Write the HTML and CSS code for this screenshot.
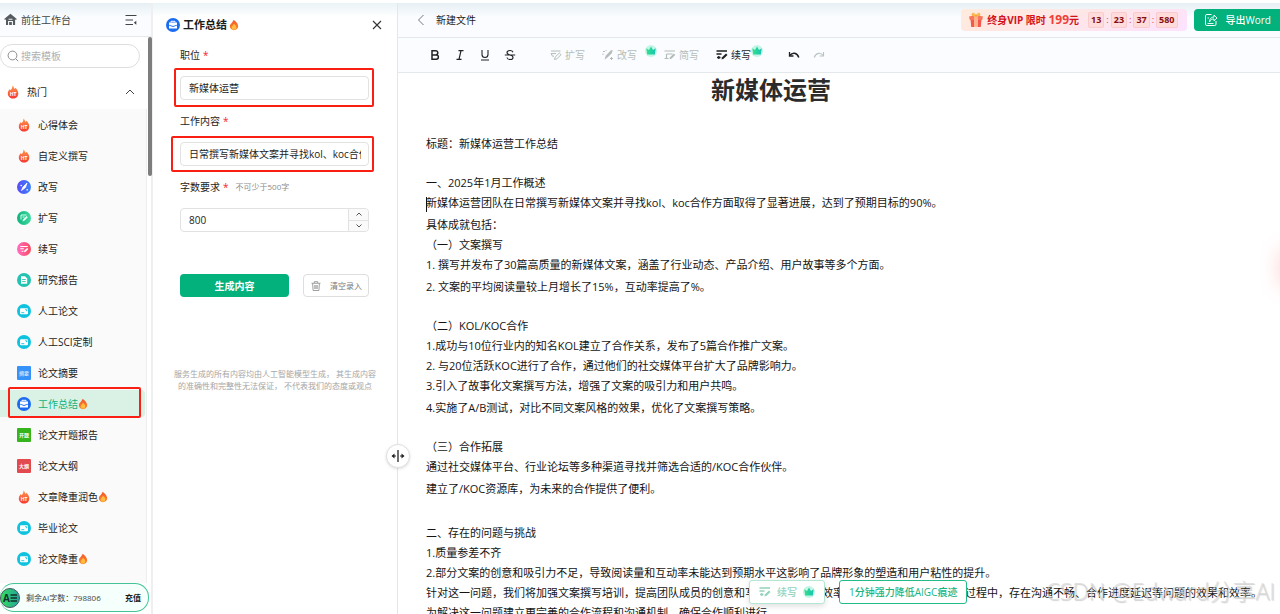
FILE: index.html
```html
<!DOCTYPE html>
<html lang="zh-CN">
<head>
<meta charset="utf-8">
<meta name="viewport" content="width=device-width, initial-scale=1">
<title>新建文件</title>
<link rel="stylesheet" href="styles.css">
</head>
<body>
<svg class="sprite" aria-hidden="true">
  <defs>
    <linearGradient id="g-ht" x1="0" y1="0" x2="0" y2="1"><stop offset="0" stop-color="#ff9a4d"/><stop offset="1" stop-color="#f5372f"/></linearGradient>
    <linearGradient id="g-blue" x1="0" y1="0" x2="1" y2="0"><stop offset="0" stop-color="#5a4cf5"/><stop offset="1" stop-color="#3b82fb"/></linearGradient>
    <linearGradient id="g-green"><stop offset="0" stop-color="#0fb37c"/><stop offset="1" stop-color="#3ddba0"/></linearGradient>
    <linearGradient id="g-pink"><stop offset="0" stop-color="#ff6ec4"/><stop offset="1" stop-color="#fb4a5e"/></linearGradient>
    <linearGradient id="g-crown"><stop offset="0" stop-color="#35e08a"/><stop offset="1" stop-color="#16c3b4"/></linearGradient>
    <linearGradient id="g-avatar"><stop offset="0" stop-color="#35dd5c"/><stop offset="1" stop-color="#22a3a0"/></linearGradient>
    <linearGradient id="g-flame" x1="0" y1="0" x2="0" y2="1"><stop offset="0" stop-color="#f4572a"/><stop offset="1" stop-color="#fb8a2a"/></linearGradient>
  </defs>
  <symbol id="ht" viewBox="0 0 14 14"><path d="M6.400 0.500C7.600 1.600 8 2.600 8.600 4c.4-.3.6-.7.6-1.200 1.800 1.300 3.100 3.400 3.100 5.600 0 3-2.300 5.200-5.200 5.200S1.800 11.300 1.800 8.500c0-1.800.9-3.200 2.200-4.400 0 .6.2 1 .6 1.200C5.700 4 6.600 2.500 6.400.5z" fill="url(#g-ht)"/><text x="7" y="11" font-size="5" font-weight="700" fill="#fff" text-anchor="middle">HT</text></symbol>
  <symbol id="flame" viewBox="0 0 12 14"><path d="M5.600.8C8.500 3 11 5.600 11 8.600c0 2.700-2.200 4.700-5 4.700S1 11.300 1 8.600C1 5.700 4.600 4.200 5.600.8z" fill="url(#g-flame)"/><path d="M6 5.500c1.700 1.500 2.800 2.700 2.800 4.200 0 1.600-1.200 2.800-2.800 2.800s-2.800-1.200-2.800-2.800C3.200 8.200 5.200 7.500 6 5.500z" fill="#ffbd3f"/></symbol>
  <symbol id="rewrite-c" viewBox="0 0 14 14"><circle cx="7" cy="7" r="7" fill="url(#g-blue)"/><path d="M4.500 10.500 6 7l4-4-1.500 4.500zM3.500 5.500h1.500M4.200 4.800v1.500M9.500 9.800H11M10.200 9v1.600" fill="#fff" stroke="#fff" stroke-width=".8"/></symbol>
  <symbol id="expand-c" viewBox="0 0 14 14"><circle cx="7" cy="7" r="7" fill="url(#g-green)"/><path d="M4 8.500V4h5.500M5.500 6h2" fill="none" stroke="#d7fff0" stroke-width="1"/><path d="M5.500 10.500 6 8.500l3.500-3.500 1.300 1.300-3.500 3.500z" fill="#eafff6"/></symbol>
  <symbol id="cont-c" viewBox="0 0 14 14"><circle cx="7" cy="7" r="7" fill="url(#g-pink)"/><path d="M3.300 4.500h7.500M3.300 6.800h3.500M4.500 9.200h2" stroke="#fff" stroke-width="1.100"/><path d="m7 10.300.5-1.800 2.600-2.600 1.200 1.200-2.600 2.600z" fill="#fff"/></symbol>
  <symbol id="report-c" viewBox="0 0 14 14"><circle cx="7" cy="7" r="7" fill="#22c3b0"/><path d="M4 3.200h4l2.200 2.200v5.400H4z" fill="#fff"/><path d="M5.200 6.500h3.500M5.200 8.600h3.500" stroke="#22c3b0" stroke-width=".9"/></symbol>
  <symbol id="paper-c" viewBox="0 0 14 14"><circle cx="7" cy="7" r="7" fill="#0fc3de"/><rect x="3" y="4.200" width="8" height="6" rx="1" fill="#fff"/><path d="M4.300 8.700h3M8.200 5.700h1.400v1.500" stroke="#0fc3de" stroke-width=".9" fill="none"/></symbol>
  <symbol id="case-c" viewBox="0 0 14 14"><circle cx="7" cy="7" r="7" fill="#1b6cf0"/><path d="M5 4.500V3.300h4v1.200" fill="none" stroke="#fff"/><path d="M3 4.500h8v2.200L7 8 3 6.700zM3 7.600l4 1.300 4-1.300v3H3z" fill="#fff"/></symbol>
  <symbol id="sq-sum" viewBox="0 0 14 14"><rect width="14" height="14" rx="1" fill="#3592f8"/><text x="7" y="9" font-size="5" fill="#fff" text-anchor="middle">摘要</text></symbol>
  <symbol id="sq-open" viewBox="0 0 14 14"><rect width="14" height="14" rx="1" fill="#35b41c"/><text x="7" y="9" font-size="5" font-weight="700" fill="#fff" text-anchor="middle">开题</text></symbol>
  <symbol id="sq-out" viewBox="0 0 14 14"><rect width="14" height="14" rx="1" fill="#e24a50"/><text x="7" y="9" font-size="5" font-weight="700" fill="#fff" text-anchor="middle">大纲</text></symbol>
  <symbol id="crown" viewBox="0 0 12 12"><circle cx="6" cy="6" r="6" fill="#c4f5e6"/><path d="M1.300 3.200 4 5l2-3.500L8 5l2.700-1.800L9.800 9.500H2.200z" fill="url(#g-crown)"/></symbol>
  <symbol id="t-expand" viewBox="0 0 12 12"><path d="M1 2h9.500M1 4.600h5M2.500 7.200h1.500M2.500 7.200 1 4.600" fill="none" stroke="currentColor"/><path d="m4.500 10.500.6-2.300 4.200-4.200 1.700 1.700-4.200 4.200z" fill="none" stroke="currentColor"/></symbol>
  <symbol id="t-rewrite" viewBox="0 0 12 12"><path d="m2.500 10.800 1.200-4L9 1.200h1.800L9.500 4.500 6 8z" fill="currentColor"/><path d="M1 2.500h2M.2 5.200h1.500M4 1v1M8 9.500h3M9.500 8v3" stroke="currentColor"/></symbol>
  <symbol id="t-short" viewBox="0 0 12 12"><path d="M.5 2h10.500M2.500 5h6M.5 9.500h4M2.500 5v4.500" fill="none" stroke="currentColor" stroke-width="1.200"/><path d="m5.500 10.300.6-2 3.700-3.700 1.400 1.400-3.700 3.700z" fill="currentColor"/></symbol>
  <symbol id="t-cont" viewBox="0 0 12 12"><path d="M.5 2h10.500M.5 5h5M1 8.500h3.500M2.800 7v3" stroke="currentColor" stroke-width="1.300"/><path d="m5.500 10.500.6-2.200 3.900-3.900 1.500 1.500-3.900 3.900z" fill="currentColor"/></symbol>
</svg>

<div class="app">
  <aside class="sidebar">
    <div class="side-head">
      <a class="home" href="#"><svg class="i13" viewBox="0 0 13 13"><path d="M6.500.8 12.800 6l-.8 1-.9-.7V12H2V6.300L1 7 .2 6z" fill="#565b60"/><path d="M4.600 12V8.500h3.800V12M4.600 6.300h3.800" stroke="#f7f9fb" stroke-width="1.100" fill="none"/></svg>前往工作台</a>
      <button class="plain" type="button" aria-label="收起"><svg class="i12" viewBox="0 0 12 12"><path d="M.5 1.500h11M.5 6H8M.5 10.500h7.500" stroke="#444" stroke-width="1.100"/><path d="M11.300 6.800v4L8.800 8.800z" fill="#444"/></svg></button>
    </div>
    <label class="search"><svg class="i12" viewBox="0 0 12 12"><circle cx="5.500" cy="5.500" r="4.400" fill="none" stroke="#8c8c8c"/><path d="m8.800 8.800 2.400 2.400" stroke="#8c8c8c"/></svg><input type="text" placeholder="搜索模板" aria-label="搜索模板"></label>
    <button class="group" type="button"><svg class="i14"><use href="#ht"/></svg><span>热门</span><svg class="i10" viewBox="0 0 10 10"><path d="m1 7 4-4 4 4" fill="none" stroke="#444"/></svg></button>
    <nav class="menu">
      <a href="#"><svg class="i14"><use href="#ht"/></svg>心得体会</a>
      <a href="#"><svg class="i14"><use href="#ht"/></svg>自定义撰写</a>
      <a href="#"><svg class="i14"><use href="#rewrite-c"/></svg>改写</a>
      <a href="#"><svg class="i14"><use href="#expand-c"/></svg>扩写</a>
      <a href="#"><svg class="i14"><use href="#cont-c"/></svg>续写</a>
      <a href="#"><svg class="i14"><use href="#report-c"/></svg>研究报告</a>
      <a href="#"><svg class="i14"><use href="#paper-c"/></svg>人工论文</a>
      <a href="#"><svg class="i14"><use href="#paper-c"/></svg>人工SCI定制</a>
      <a href="#"><svg class="i14"><use href="#sq-sum"/></svg>论文摘要</a>
      <a href="#" class="active"><svg class="i14"><use href="#case-c"/></svg>工作总结<svg class="hot"><use href="#flame"/></svg><i class="mark mark-menu"></i></a>
      <a href="#"><svg class="i14"><use href="#sq-open"/></svg>论文开题报告</a>
      <a href="#"><svg class="i14"><use href="#sq-out"/></svg>论文大纲</a>
      <a href="#"><svg class="i14"><use href="#ht"/></svg>文章降重润色<svg class="hot"><use href="#flame"/></svg></a>
      <a href="#"><svg class="i14"><use href="#paper-c"/></svg>毕业论文</a>
      <a href="#"><svg class="i14"><use href="#paper-c"/></svg>论文降重<svg class="hot"><use href="#flame"/></svg></a>
      <a href="#" aria-label="更多"><svg class="i14"><use href="#report-c"/></svg></a>
    </nav>
    <i class="thumb"></i>
    <div class="quota">
      <div class="pill">
        <svg class="avatar" viewBox="0 0 20 20"><circle cx="10" cy="10" r="9.500" fill="url(#g-avatar)" stroke="#4b5560"/><text x="6.500" y="13.500" font-size="10" font-weight="700" text-anchor="middle" fill="#13302a">A</text><path d="M10.500 7h6.500M10.500 10h6.500M10.500 13h6.500" stroke="#13302a" stroke-width="1.300"/></svg>
        <span>剩余AI字数：798806</span>
        <a href="#">充值</a>
      </div>
    </div>
  </aside>

  <section class="panel">
    <header class="panel-head">
      <svg class="i14"><use href="#case-c"/></svg>
      <h2>工作总结</h2>
      <svg class="hot"><use href="#flame"/></svg>
      <button class="plain close" type="button" aria-label="关闭"><svg class="i10" viewBox="0 0 10 10"><path d="m1 1 8 8M9 1 1 9" stroke="#333" stroke-width="1.100"/></svg></button>
    </header>
    <form class="form">
      <div class="field">
        <label for="job">职位<b>*</b></label>
        <div class="box"><input id="job" type="text" value="新媒体运营"><i class="mark mark-job"></i></div>
      </div>
      <div class="field">
        <label for="work">工作内容<b>*</b></label>
        <div class="box"><input id="work" type="text" value="日常撰写新媒体文案并寻找kol、koc合作"><i class="mark mark-work"></i></div>
      </div>
      <div class="field">
        <label for="count">字数要求<b>*</b><small>不可少于500字</small></label>
        <div class="box number">
          <input id="count" type="text" inputmode="numeric" value="800">
          <span class="steps">
            <button type="button" aria-label="增加"><svg class="i8" viewBox="0 0 8 8"><path d="m1.500 5.500 2.500-2.500 2.500 2.500" fill="none" stroke="#555"/></svg></button>
            <button type="button" aria-label="减少"><svg class="i8" viewBox="0 0 8 8"><path d="m1.500 2.500 2.500 2.500 2.500-2.500" fill="none" stroke="#555"/></svg></button>
          </span>
        </div>
      </div>
      <div class="actions">
        <button class="primary" type="button">生成内容</button>
        <button class="clear" type="button"><svg class="i10" viewBox="0 0 10 10"><path d="M.5 2.300h9M3.300 2V.7h3.400V2M1.600 2.500l.5 7h5.800l.5-7M3.800 4v4M5 4v4M6.200 4v4" fill="none" stroke="#888" stroke-width=".8"/></svg>清空录入</button>
      </div>
    </form>
    <p class="note">服务生成的所有内容均由人工智能模型生成， 其生成内容<br>的准确性和完整性无法保证， 不代表我们的态度或观点</p>
    <button class="grip" type="button" aria-label="调整宽度"><svg class="i14" viewBox="0 0 14 14"><path d="M7 1v12" stroke="#333" stroke-width="1.400"/><path d="M1.500 7H5M9 7h3.500" stroke="#222" stroke-width="1.200"/><path d="M3.500 4.500.5 7l3 2.500zM10.500 4.500l3 2.500-3 2.500z" fill="#222"/></svg></button>
  </section>

  <main class="editor">
    <header class="top">
      <button class="plain" type="button" aria-label="返回"><svg class="i12" viewBox="0 0 12 12"><path d="M8.500 1 3.500 6l5 5" fill="none" stroke="#777"/></svg></button>
      <span class="file">新建文件</span>
      <div class="promo">
        <svg class="gift" viewBox="0 0 16 16"><path d="M2.500 7h11l-.7 8H3.200z" fill="#f4584c"/><path d="M1 4.500 8 3l7 1.500-.8 3.500H1.800z" fill="#f9765a"/><path d="M6 3.800h4V15H6z" fill="#ffb28c"/><path d="M8 4C5 4.500 3.500 3.500 4 2c.6-1.600 3-1 4 2zm0 0c3 .5 4.500-.5 4-2-.6-1.600-3-1-4 2z" fill="#ffc04a" stroke="#f49a35" stroke-width=".6"/></svg>
        <strong>终身VIP 限时 <em>199</em>元</strong>
        <span class="timer"><b>13</b>:<b>23</b>:<b>37</b>:<b>580</b></span>
      </div>
      <button class="export" type="button"><svg class="i14" viewBox="0 0 14 14"><path d="M7.500 1.500H2.800Q1.500 1.500 1.500 2.800v8.400q0 1.300 1.300 1.300h8q1.200 0 1.200-1.300V8" fill="none" stroke="#fff"/><path d="M5.500 9C5.500 5.500 7.500 4 10 4V2l3 3-3 3V6C8 6 6.500 6.500 5.500 9zM3.500 5h1.500M3.500 10.500h6" fill="none" stroke="#fff" stroke-width=".9"/></svg>导出Word</button>
    </header>
    <div class="tools">
      <div class="marks">
        <button class="plain" type="button" aria-label="加粗"><svg class="i12" viewBox="0 0 12 12"><path d="M3 1.700h3.700a2.100 2.100 0 0 1 0 4.200H3zM3 5.900h4.200a2.200 2.200 0 0 1 0 4.400H3z" fill="none" stroke="#222" stroke-width="1.500"/></svg></button>
        <button class="plain" type="button" aria-label="斜体"><svg class="i12" viewBox="0 0 12 12"><path d="M4.500 1.700H9.500M2.500 10.300h5M7 1.700 5 10.300" stroke="#222" stroke-width="1.200"/></svg></button>
        <button class="plain" type="button" aria-label="下划线"><svg class="i12" viewBox="0 0 12 12"><path d="M3 1v4.500a3 3 0 0 0 6 0V1M2 11h8" fill="none" stroke="#222" stroke-width="1.100"/></svg></button>
        <button class="plain" type="button" aria-label="删除线"><svg class="i12" viewBox="0 0 12 12"><path d="M9 3.300C8.500 2 7.500 1.500 6 1.500c-1.800 0-3 .8-3 2.100 0 1.400 1.300 1.900 3 2.400 1.800.5 3 1 3 2.400 0 1.300-1.200 2.100-3 2.100S3.200 9.800 2.900 8.500M.8 6h10.400" fill="none" stroke="#222" stroke-width="1.100"/></svg></button>
      </div>
      <div class="ai">
        <button class="tool" type="button"><svg class="i12"><use href="#t-expand"/></svg>扩写</button>
        <button class="tool far" type="button"><svg class="i12"><use href="#t-rewrite"/></svg>改写<svg class="badge"><use href="#crown"/></svg></button>
        <button class="tool" type="button"><svg class="i12"><use href="#t-short"/></svg>简写</button>
        <button class="tool on" type="button"><svg class="i12"><use href="#t-cont"/></svg>续写<svg class="badge"><use href="#crown"/></svg></button>
      </div>
      <div class="history">
        <button class="plain" type="button" aria-label="撤销"><svg class="i12" viewBox="0 0 12 12"><path d="M1.500 3v4h4" fill="none" stroke="#222" stroke-width="1.300"/><path d="M1.800 6.500C4.500 3 9 3.500 10.800 8.500" fill="none" stroke="#222" stroke-width="1.500"/></svg></button>
        <button class="plain" type="button" aria-label="重做"><svg class="i12" viewBox="0 0 12 12"><path d="M10.500 3v4h-4" fill="none" stroke="#b9c4c0" stroke-width="1.100"/><path d="M10.200 6.500C7.500 3 3 3.500 1.200 8.500" fill="none" stroke="#b9c4c0" stroke-width="1.200"/></svg></button>
      </div>
    </div>
    <article class="doc">
      <h1>新媒体运营</h1>
      <section><p>标题：新媒体运营工作总结</p></section>
      <section>
        <p>一、2025年1月工作概述</p>
        <p><i class="caret"></i>新媒体运营团队在日常撰写新媒体文案并寻找kol、koc合作方面取得了显著进展，达到了预期目标的90%。</p>
        <p class="lead">具体成就包括：</p>
        <p>（一）文案撰写</p>
        <p>1. 撰写并发布了30篇高质量的新媒体文案，涵盖了行业动态、产品介绍、用户故事等多个方面。</p>
        <p class="lead">2. 文案的平均阅读量较上月增长了15%，互动率提高了%。</p>
      </section>
      <section>
        <p>（二）KOL/KOC合作</p>
        <p>1.成功与10位行业内的知名KOL建立了合作关系，发布了5篇合作推广文案。</p>
        <p>2. 与20位活跃KOC进行了合作，通过他们的社交媒体平台扩大了品牌影响力。</p>
        <p>3.引入了故事化文案撰写方法，增强了文案的吸引力和用户共鸣。</p>
        <p class="lead">4.实施了A/B测试，对比不同文案风格的效果，优化了文案撰写策略。</p>
      </section>
      <section>
        <p>（三）合作拓展</p>
        <p>通过社交媒体平台、行业论坛等多种渠道寻找并筛选合适的/KOC合作伙伴。</p>
        <p class="lead">建立了/KOC资源库，为未来的合作提供了便利。</p>
      </section>
      <section class="chapter">
        <p>二、存在的问题与挑战</p>
        <p>1.质量参差不齐</p>
        <p>2.部分文案的创意和吸引力不足，导致阅读量和互动率未能达到预期水平这影响了品牌形象的塑造和用户粘性的提升。</p>
        <p>针对这一问题，我们将加强文案撰写培训，提高团队成员的创意和写作能力与工作效率，在与合作方沟通对接的过程中，存在沟通不畅、合作进度延迟等问题的效果和效率。</p>
        <p>为解决这一问题建立更完善的合作流程和沟通机制，确保合作顺利进行</p>
      </section>
    </article>
    <div class="float">
      <button class="f-cont" type="button"><svg class="i12"><use href="#t-cont"/></svg>续写<svg class="i12"><use href="#crown"/></svg></button>
      <button class="f-aigc" type="button">1分钟强力降低AIGC痕迹</button>
    </div>
    <div class="watermark">CSDN @Edward分享AI</div>
    <i class="glow"></i>
  </main>
</div>
</body>
</html>
```

FILE: styles.css
```css
* { box-sizing: border-box; }
body {
  margin: 0;
  font: 10px/20px "Open Sans", "Noto Sans CJK SC", sans-serif;
  color: #1c1c1c;
  background: #fff;
}
button, input { font: inherit; color: inherit; }
button { padding: 0; border: 0; background: none; }
a { color: inherit; text-decoration: none; }
svg { display: block; flex: none; }
.sprite { position: absolute; width: 0; height: 0; }
.i8 { width: 8px; height: 8px; }
.i10 { width: 10px; height: 10px; }
.i12 { width: 12px; height: 12px; }
.i13 { width: 13px; height: 13px; }
.i14 { width: 14px; height: 14px; }
.hot { width: 10px; height: 12px; }
.plain { display: flex; align-items: center; justify-content: center; }

.app {
  display: grid;
  grid-template-columns: 153px 245px minmax(0, 1fr);
  height: 100vh;
  padding-top: 3px;
  overflow: hidden;
}

/* left navigation */
.sidebar {
  position: relative;
  display: flex;
  flex-direction: column;
  min-height: 0;
  border-right: 2px solid #efefef;
}
.side-head {
  display: flex;
  align-items: center;
  justify-content: space-between;
  flex: none;
  height: 34px;
  padding: 0 14px 0 4px;
  border-bottom: 1px solid #e6e8ea;
  background: linear-gradient(#e6f0f4, #fafcff 14px);
}
.home { display: flex; align-items: center; gap: 4px; color: #444; }
.search {
  display: flex;
  align-items: center;
  gap: 2px;
  flex: none;
  height: 24px;
  margin: 7px 11px 7px 0;
  padding: 0 6px;
  border: 1px solid #dedede;
  border-radius: 12px;
}
.search input { width: 100%; min-width: 0; padding: 0; border: 0; outline: 0; background: none; }
.search input::placeholder { color: #b0b0b0; }
.group {
  display: flex;
  align-items: center;
  gap: 7px;
  flex: none;
  height: 34px;
  padding: 0 16px 0 6px;
}
.group span { flex: 1; text-align: left; }
.menu {
  display: flex;
  flex-direction: column;
  gap: 4px;
  flex: 1;
  min-height: 0;
  margin-right: 4px;
  padding-top: 2px;
  border-right: 1px solid #eee;
  background: #fafafa;
  overflow: hidden;
}
.menu a {
  position: relative;
  display: flex;
  align-items: center;
  flex: none;
  height: 27px;
  margin-right: 1px;
  padding-left: 17px;
  border-radius: 0 4px 4px 0;
}
.menu .i14 { margin-right: 7px; }
.menu .active { background: #daf1e5; color: #12b17c; }
.thumb {
  position: absolute;
  top: 34px;
  right: -1px;
  width: 4px;
  height: 139px;
  border-radius: 2px;
  background: #7d7d7d;
}
.quota { flex: none; padding: 0 2px 2px 0; background: #fff; }
.pill {
  display: flex;
  align-items: center;
  height: 29px;
  padding-right: 7px;
  border: 1px solid #45c397;
  border-left: 0;
  border-radius: 14px;
  background: #f5fffb;
  font-size: 8px;
}
.avatar { width: 20px; height: 20px; }
.pill span { flex: 1; padding-left: 6px; color: #444; }
.pill a { font-weight: 700; }

/* highlight frames */
.mark {
  position: absolute;
  border: 2px solid #f91f12;
  border-radius: 2px;
  pointer-events: none;
}
.mark-menu { inset: -3px 4px -1px 8px; }
.mark-job { inset: -9px -6px -8px -7px; }
.mark-work { inset: -7px -6px -7px -10px; }

/* generator form */
.panel { position: relative; border-right: 1px solid #e6e6e6; }
.panel-head {
  display: flex;
  align-items: center;
  height: 42px;
  padding: 2px 15px 0 13px;
  background: linear-gradient(#e9f3f6, #fff 14px);
}
.panel-head h2 { margin: 0 2px 0 3px; font-size: 11px; line-height: 20px; }
.close { margin-left: auto; }
.form { display: flex; flex-direction: column; gap: 11px; padding: 0 28px 0 27px; }
.field { display: flex; flex-direction: column; gap: 11px; }
.field label { display: flex; align-items: center; height: 20px; }
.field b { margin-left: 3px; color: #f5222d; font-weight: 400; }
.field small { margin-left: 7px; font-size: 8px; color: #8c8c8c; }
.box { position: relative; display: flex; height: 24px; border: 1px solid #e2e2e2; border-radius: 4px; background: #fff; }
.box input { flex: 1; min-width: 0; width: 100%; margin: 0 7px 0 8px; padding: 0; border: 0; outline: 0; background: none; }
.steps { display: flex; flex-direction: column; width: 20px; border-left: 1px solid #e2e2e2; background: #fafafa; border-radius: 0 4px 4px 0; }
.number input { margin-right: 0; }
.steps button { display: flex; flex: 1; align-items: center; justify-content: center; }
.steps button + button { border-top: 1px solid #e2e2e2; }
.actions { display: flex; gap: 14px; margin-top: 31px; }
.primary { flex: 1; height: 23px; border-radius: 4px; background: #03b17c; color: #fff; font-weight: 700; }
.clear {
  display: flex;
  align-items: center;
  justify-content: space-between;
  width: 66px;
  height: 23px;
  padding: 0 6px 0 7px;
  border: 1px solid #dedede;
  border-radius: 4px;
  font-size: 8px;
  color: #777;
}
.note { margin: 71px 0 0; font-size: 8px; line-height: 12px; text-align: center; color: #a6a6a6; white-space: nowrap; }
.grip {
  position: absolute;
  top: 441px;
  right: -13px;
  z-index: 2;
  display: flex;
  align-items: center;
  justify-content: center;
  width: 24px;
  height: 24px;
  border: 1px solid #e0e0e0;
  border-radius: 50%;
  background: #fff;
  box-shadow: 0 1px 3px #0002;
}

/* editor */
.editor { position: relative; display: flex; flex-direction: column; min-width: 0; min-height: 0; overflow: hidden; }
.top {
  display: flex;
  align-items: center;
  flex: none;
  height: 35px;
  padding-left: 17px;
  border-bottom: 1px solid #e3e8ea;
  background: linear-gradient(#e6f0f4, #fafcff 14px);
}
.file { margin-left: 9px; }
.promo {
  display: flex;
  align-items: center;
  height: 22px;
  margin-left: auto;
  padding: 0 9px 0 7px;
  border-radius: 4px;
  background: linear-gradient(160deg, #ffebdd, #fee6e8 50%, #fde2ff);
  color: #d3111b;
}
.gift { width: 16px; height: 16px; margin-right: 3px; }
.promo strong { display: flex; align-items: center; white-space: pre; }
.promo em { font-style: normal; font-size: 12px; color: #ee4038; }
.timer { display: flex; align-items: center; gap: 2px; margin-left: 9px; font-size: 9px; color: #d3444b; }
.timer b { padding: 0 2px; border: 1px solid #fbcaca; border-radius: 2px; background: #ffdcdb; color: #870c12; line-height: 14px; }
.export {
  display: flex;
  align-items: center;
  gap: 8px;
  height: 22px;
  margin-left: 7px;
  padding: 0 9px 0 10px;
  border-radius: 4px 0 0 4px;
  background: #03b17c;
  color: #fff;
  font-weight: 500;
}
.tools {
  display: flex;
  align-items: center;
  flex: none;
  height: 35px;
  padding-left: 31px;
  border-bottom: 1px solid #e3e8ea;
  background: #fafcff;
}
.marks { display: flex; gap: 13px; }
.ai { display: flex; gap: 17px; margin-left: 34px; }
.tool { position: relative; display: flex; align-items: center; gap: 3px; color: #b4bcb8; }
.tool.far { margin-right: 10px; }
.tool.on { color: #1f1f1f; }
.badge { position: absolute; left: 100%; top: 0; width: 12px; height: 12px; }
.far .badge { left: 43px; }
.history { display: flex; gap: 13px; margin-left: 37px; }

.doc { flex: 1; min-height: 0; padding-left: 28px; overflow: hidden; font-size: 11px; white-space: nowrap; color: #141414; }
.doc h1 { max-width: 690px; margin: 0 0 27px; font-size: 24px; line-height: 34px; text-align: center; color: #2b2b2b; }
.doc section { margin-bottom: 19px; }
.doc p { margin: 0; }
.doc .lead { margin-top: 2px; }
.doc .chapter { margin-top: 24px; }
.caret { display: inline-block; width: 1px; height: 15px; margin-right: -1px; background: #111; vertical-align: middle; }

.float { position: absolute; bottom: 10px; left: 351px; display: flex; gap: 14px; }
.float button { display: flex; align-items: center; height: 24px; padding: 0 9px; border: 1px solid #23bb88; border-radius: 3px; background: #fff; color: #19b481; font-weight: 500; }
.float .f-cont { gap: 6px; border-color: #b5e6d3; color: #94d3ba; box-shadow: 0 2px 6px #0002; }
.watermark {
  position: absolute;
  right: 5px;
  bottom: 8px;
  font-size: 23px;
  line-height: 30px;
  font-weight: 300;
  color: #d6d6d6bb;
  text-shadow: 1px 1px 1px #9997;
  white-space: nowrap;
  pointer-events: none;
}
.glow { position: absolute; right: -12px; top: 246px; width: 10px; height: 38px; border-radius: 5px; box-shadow: 0 0 20px #ff5a5a66; }
```
